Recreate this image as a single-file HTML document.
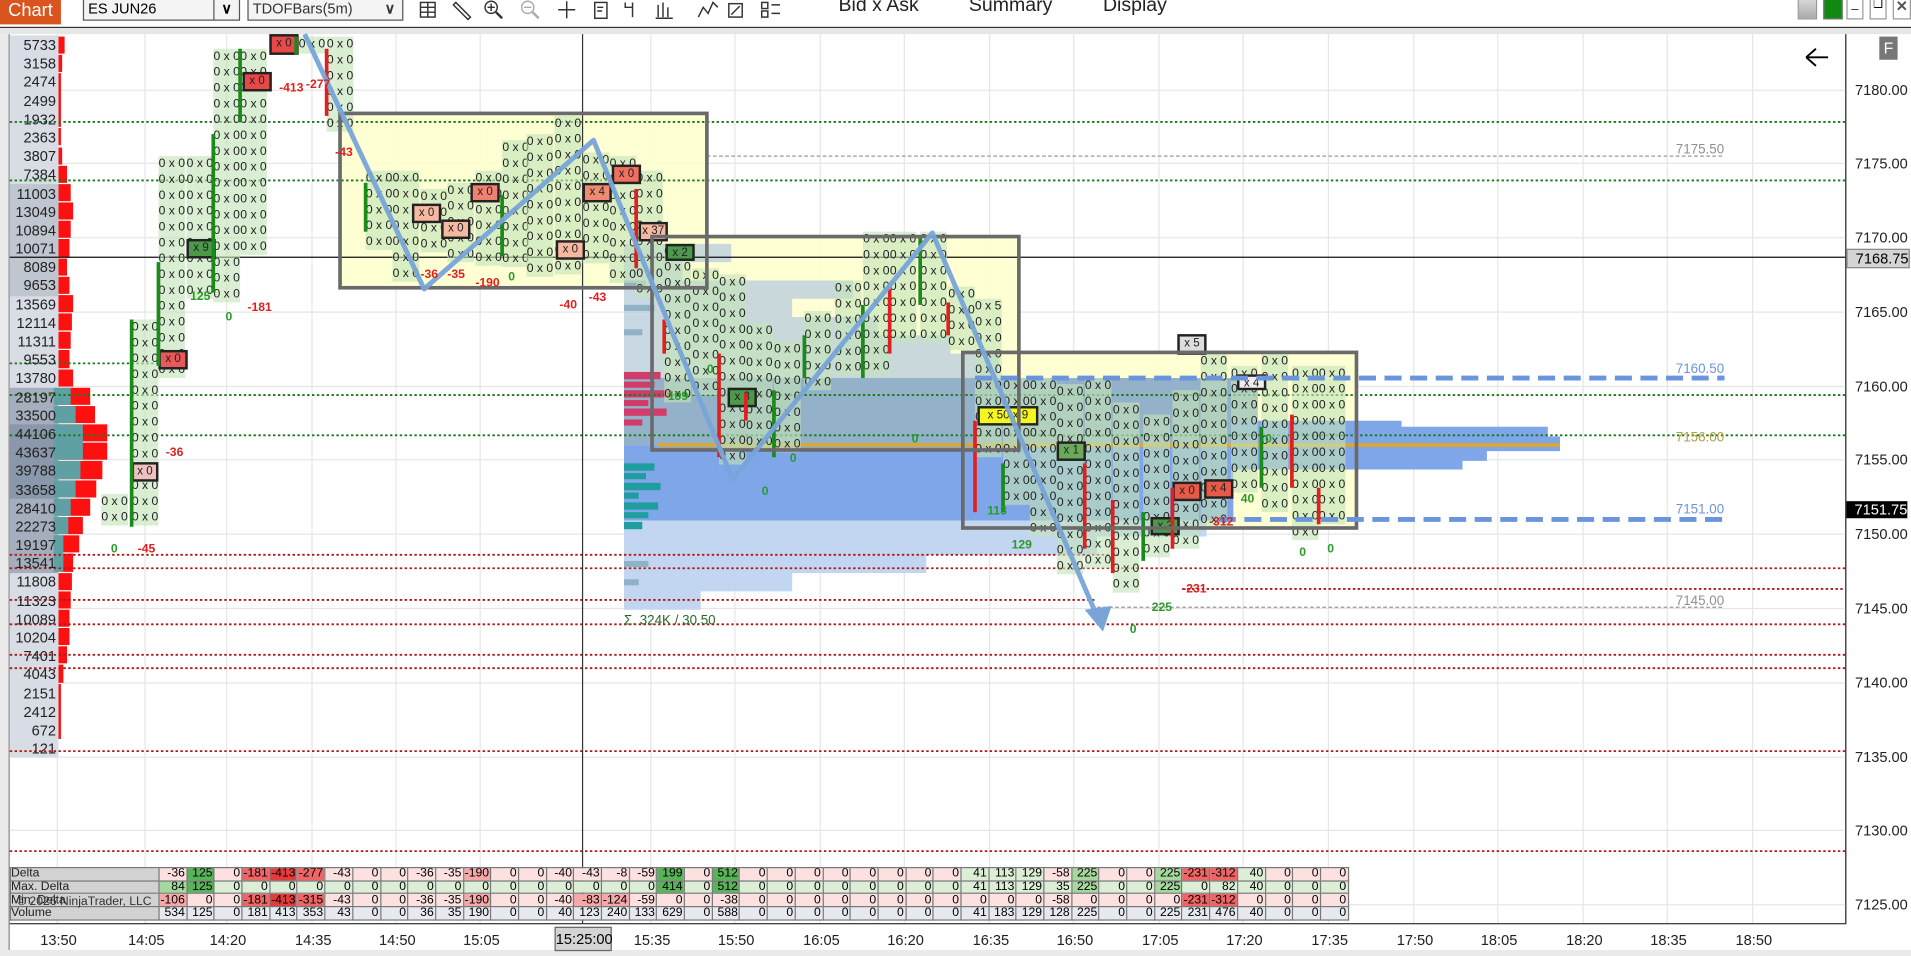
<!DOCTYPE html>
<html><head><meta charset="utf-8">
<style>
html,body{margin:0;padding:0;width:1911px;height:956px;overflow:hidden;background:#fff;}
#s{position:absolute;left:0;top:0;width:1568px;height:784px;transform:scale(1.21875,1.21939);transform-origin:0 0;font-family:"Liberation Sans",sans-serif;overflow:hidden;background:#fff;}
.a{position:absolute;}
.c{position:absolute;width:22px;background:rgba(196,228,184,.62);font-size:10px;line-height:13px;text-align:center;white-space:pre;color:#222;overflow:hidden;}
.hl{position:absolute;border:2px solid #222;box-sizing:border-box;font-size:9.5px;line-height:11px;text-align:center;color:#222;}
.lab{position:absolute;font-size:10px;font-weight:bold;}
.g{color:#2a9a2a}.r{color:#e02020}
table{border-collapse:collapse;position:absolute;left:8px;top:711px;font-size:10px;}
td{height:9.7px;padding:0 1px 0 0;border:1px solid #777;text-align:right;line-height:9px;width:20.7px;overflow:hidden;white-space:nowrap;}
td.h{width:120px;text-align:left;background:#d2d2d2;color:#222;}
.n0{background:#fde0e0}.n1{background:#f6a8a8}.n2{background:#ef6464}.n3{background:#e43c3c}
.p0{background:#dcefd6}.p1{background:#a6d89e}.p2{background:#58b458}.v{background:#e6eaee}
.t{position:absolute;top:764px;font-size:12px;color:#222;}
.pl{position:absolute;left:1522px;font-size:12px;color:#222;}
</style></head><body><div id="s">

<!-- toolbar -->
<div class="a" style="left:0;top:0;width:1568px;height:22px;background:#fff;border-bottom:1px solid #333;"></div>
<div class="a" style="left:0;top:23px;width:1568px;height:5px;background:#e6e6e6;"></div>
<div class="a" style="left:0;top:0;width:50px;height:20px;background:#d9541e;color:#fff;font-size:15px;line-height:18px;text-align:center;">Chart</div>
<div class="a" style="left:68px;top:-2px;width:127px;height:17px;border:1px solid #555;background:#f4f4f4;font-size:12px;line-height:16px;">&nbsp;ES JUN26<span style="position:absolute;right:0;top:0;width:20px;height:17px;border-left:1px solid #555;text-align:center;font-weight:bold;">&#8744;</span></div>
<div class="a" style="left:203px;top:-2px;width:126px;height:17px;border:1px solid #555;background:#f4f4f4;font-size:12px;line-height:16px;color:#333;">&nbsp;TDOFBars(5m)<span style="position:absolute;right:0;top:0;width:20px;text-align:center;font-weight:bold;">&#8744;</span></div>
<svg class="a" style="left:340px;top:0" width="310" height="20" stroke="#333" fill="none" stroke-width="1.2">
<rect x="5" y="2" width="12" height="12"/><line x1="11" y1="2" x2="11" y2="14"/><line x1="5" y1="6" x2="17" y2="6"/><line x1="5" y1="10" x2="17" y2="10"/>
<path d="M34 2 L46 14 L44 16 L32 4Z"/>
<circle cx="63" cy="6" r="5"/><line x1="67" y1="10" x2="72" y2="15" stroke-width="2"/><line x1="60" y1="6" x2="66" y2="6"/><line x1="63" y1="3" x2="63" y2="9"/>
<g stroke="#aaa"><circle cx="93" cy="6" r="5"/><line x1="97" y1="10" x2="102" y2="15" stroke-width="2"/><line x1="90" y1="6" x2="96" y2="6"/></g>
<line x1="118" y1="8" x2="132" y2="8"/><line x1="125" y1="1" x2="125" y2="15"/>
<rect x="148" y="2" width="10" height="13"/><path d="M150 6h5M150 9h4"/>
<path d="M173 2v4h6v-4M179 6v8"/><path d="M200 4v10M204 2v12M208 6v8M198 15h14"/>
<path d="M233 14l4-8 4 5 4-9 4 4"/><rect x="258" y="3" width="11" height="11"/><path d="M260 12l7-7"/>
<rect x="285" y="2" width="5" height="5"/><rect x="285" y="9" width="5" height="5"/><path d="M293 4h7M293 11h7"/>
</svg>
<div class="a" style="left:688px;top:-4px;font-size:16px;color:#222;">Bid x Ask</div>
<div class="a" style="left:795px;top:-4px;font-size:16px;color:#222;">Summary</div>
<div class="a" style="left:905px;top:-4px;font-size:16px;color:#222;">Display</div>
<div class="a" style="left:1475px;top:-3px;width:14px;height:17px;background:linear-gradient(#ddd,#aaa);border:1px solid #999;"></div>
<div class="a" style="left:1496px;top:-3px;width:14px;height:17px;background:#118811;border:1px solid #777;"></div>
<div class="a" style="left:1515px;top:-3px;width:12px;height:17px;border:1px solid #999;background:#fff;font-size:10px;text-align:center;">_</div>
<div class="a" style="left:1534px;top:-3px;width:12px;height:17px;border:1px solid #999;background:#fff;font-size:9px;text-align:center;">&#10063;</div>
<div class="a" style="left:1553px;top:-3px;width:13px;height:17px;border:1px solid #999;background:#fff;font-size:12px;font-weight:bold;text-align:center;color:#555;">&#10005;</div>

<!-- chart panel -->
<div class="a" style="left:0;top:28px;width:7px;height:756px;background:#eaeaea;border-right:1px solid #888;"></div>
<div class="a" style="left:1514px;top:28px;width:1px;height:730px;background:#222;"></div>

<svg class="a" style="left:0;top:0" width="1568" height="784">
<g stroke="#e6e6e6" stroke-width="1">
<line x1="47" y1="28" x2="47" y2="757"/><line x1="119" y1="28" x2="119" y2="757"/><line x1="186" y1="28" x2="186" y2="757"/><line x1="256" y1="28" x2="256" y2="757"/><line x1="325" y1="28" x2="325" y2="757"/><line x1="394" y1="28" x2="394" y2="757"/><line x1="534" y1="28" x2="534" y2="757"/><line x1="603" y1="28" x2="603" y2="757"/><line x1="673" y1="28" x2="673" y2="757"/><line x1="742" y1="28" x2="742" y2="757"/><line x1="812" y1="28" x2="812" y2="757"/><line x1="881" y1="28" x2="881" y2="757"/><line x1="951" y1="28" x2="951" y2="757"/><line x1="1020" y1="28" x2="1020" y2="757"/><line x1="1090" y1="28" x2="1090" y2="757"/><line x1="1160" y1="28" x2="1160" y2="757"/><line x1="1229" y1="28" x2="1229" y2="757"/><line x1="1299" y1="28" x2="1299" y2="757"/><line x1="1368" y1="28" x2="1368" y2="757"/><line x1="1438" y1="28" x2="1438" y2="757"/>
<line x1="8" y1="74" x2="1514" y2="74"/><line x1="8" y1="134" x2="1514" y2="134"/><line x1="8" y1="195" x2="1514" y2="195"/><line x1="8" y1="256" x2="1514" y2="256"/><line x1="8" y1="317" x2="1514" y2="317"/><line x1="8" y1="377" x2="1514" y2="377"/><line x1="8" y1="438" x2="1514" y2="438"/><line x1="8" y1="499" x2="1514" y2="499"/><line x1="8" y1="560" x2="1514" y2="560"/><line x1="8" y1="621" x2="1514" y2="621"/><line x1="8" y1="681" x2="1514" y2="681"/><line x1="8" y1="742" x2="1514" y2="742"/>
</g>
<rect x="279" y="93" width="301" height="143" fill="#ffffcc" opacity=".85"/>
<rect x="535" y="194" width="301" height="175" fill="#ffffcc" opacity=".85"/>
<rect x="790" y="289" width="323" height="144" fill="#ffffcc" opacity=".85"/>
<path d="M512 200H600V215H560V230H700V245H650V260H720V275H780V290H820V310H512Z" fill="#bcd0dc" opacity=".8"/>
<rect x="512" y="310" width="520" height="55" fill="#93b1c8"/>
<rect x="512" y="365" width="500" height="62" fill="#7ea6e8"/>
<path d="M512 427H990V440H900V455H760V470H650V485H575V500H512Z" fill="#c2d6f2"/>
<g fill="#d23c6a"><rect x="512" y="305" width="30" height="6"/><rect x="512" y="313" width="25" height="5"/><rect x="512" y="320" width="40" height="6"/><rect x="512" y="328" width="20" height="5"/><rect x="512" y="335" width="35" height="6"/><rect x="512" y="344" width="15" height="5"/></g>
<g fill="#1e9e9e"><rect x="512" y="380" width="25" height="6"/><rect x="512" y="388" width="18" height="5"/><rect x="512" y="396" width="30" height="6"/><rect x="512" y="404" width="12" height="5"/><rect x="512" y="412" width="28" height="6"/><rect x="512" y="420" width="20" height="5"/><rect x="512" y="428" width="15" height="6"/></g>
<g fill="#8fb2c4"><rect x="512" y="230" width="18" height="5"/><rect x="512" y="250" width="25" height="5"/><rect x="512" y="270" width="15" height="5"/><rect x="512" y="460" width="20" height="5"/><rect x="512" y="475" width="12" height="5"/></g>
<path d="M1010 345H1150V350H1270V358H1280V370H1220V378H1200V385H1010Z" fill="#7ea6e8"/>
<g>
<rect x="8" y="29" width="40" height="592" fill="#d8dce4"/>
<rect x="8" y="151" width="40" height="92" fill="#c0c6d0"/>
<rect x="8" y="318" width="40" height="152" fill="#a4aebc"/>
<rect x="8" y="348" width="40" height="61" fill="#8b97aa"/>
</g>
<g fill="#ff1010">
<rect x="48" y="30" width="5" height="14"/><rect x="48" y="45" width="3" height="14"/><rect x="48" y="60" width="2" height="44"/><rect x="48" y="105" width="2" height="14"/><rect x="48" y="121" width="3" height="14"/><rect x="48" y="136" width="7" height="14"/><rect x="48" y="151" width="10" height="14"/><rect x="48" y="166" width="12" height="14"/><rect x="48" y="181" width="10" height="14"/><rect x="48" y="196" width="9" height="15"/><rect x="48" y="212" width="7" height="14"/><rect x="48" y="227" width="9" height="14"/><rect x="48" y="242" width="12" height="14"/><rect x="48" y="257" width="11" height="14"/><rect x="48" y="272" width="10" height="14"/><rect x="48" y="287" width="9" height="15"/><rect x="48" y="303" width="12" height="14"/><rect x="48" y="318" width="26" height="14"/><rect x="48" y="333" width="30" height="14"/><rect x="48" y="348" width="40" height="14"/><rect x="48" y="363" width="40" height="14"/><rect x="48" y="378" width="36" height="15"/><rect x="48" y="394" width="31" height="14"/><rect x="48" y="409" width="26" height="14"/><rect x="48" y="424" width="20" height="14"/><rect x="48" y="439" width="17" height="14"/><rect x="48" y="454" width="12" height="15"/><rect x="48" y="470" width="11" height="14"/><rect x="48" y="485" width="10" height="14"/><rect x="48" y="500" width="9" height="14"/><rect x="48" y="515" width="9" height="14"/><rect x="48" y="530" width="7" height="14"/><rect x="48" y="545" width="4" height="15"/><rect x="48" y="561" width="2" height="45"/>
</g>
<g fill="#5fa0a4"><rect x="44" y="318" width="14" height="14"/><rect x="44" y="333" width="18" height="14"/><rect x="44" y="348" width="24" height="29"/><rect x="44" y="378" width="22" height="15"/><rect x="44" y="394" width="18" height="14"/><rect x="44" y="409" width="14" height="14"/><rect x="44" y="424" width="12" height="14"/><rect x="44" y="439" width="8" height="30"/></g>
<g stroke-width="1.5" fill="none">
<line x1="8" y1="100" x2="1514" y2="100" stroke="#1a7a1a" stroke-dasharray="2 2"/>
<line x1="8" y1="148" x2="1514" y2="148" stroke="#1a7a1a" stroke-dasharray="2 2"/>
<line x1="8" y1="298" x2="130" y2="298" stroke="#1a7a1a" stroke-dasharray="2 2"/>
<line x1="8" y1="324" x2="1514" y2="324" stroke="#1a7a1a" stroke-dasharray="2 2"/>
<line x1="8" y1="357" x2="1514" y2="357" stroke="#1a7a1a" stroke-dasharray="2 2"/>
<line x1="8" y1="455" x2="920" y2="455" stroke="#b01818" stroke-dasharray="2 2"/>
<line x1="8" y1="466" x2="1514" y2="466" stroke="#b01818" stroke-dasharray="2 2"/>
<line x1="970" y1="483" x2="1514" y2="483" stroke="#b01818" stroke-dasharray="2 2"/>
<line x1="8" y1="492" x2="900" y2="492" stroke="#b01818" stroke-dasharray="2 2"/>
<line x1="8" y1="512" x2="1514" y2="512" stroke="#b01818" stroke-dasharray="2 2"/>
<line x1="8" y1="537" x2="1514" y2="537" stroke="#b01818" stroke-dasharray="2 2"/>
<line x1="8" y1="548" x2="1514" y2="548" stroke="#b01818" stroke-dasharray="2 2"/>
<line x1="8" y1="616" x2="1514" y2="616" stroke="#b01818" stroke-dasharray="2 2"/>
<line x1="8" y1="698" x2="1514" y2="698" stroke="#b01818" stroke-dasharray="2 2"/>
<line x1="580" y1="128" x2="1415" y2="128" stroke="#999" stroke-width="1" stroke-dasharray="3 2"/>
<line x1="900" y1="498" x2="1415" y2="498" stroke="#999" stroke-width="1" stroke-dasharray="3 2"/>
<line x1="8" y1="211" x2="1514" y2="211" stroke="#111" stroke-width="1"/>
<line x1="478" y1="28" x2="478" y2="757" stroke="#333" stroke-width="1"/>
<line x1="540" y1="365" x2="1280" y2="365" stroke="#e0a828" stroke-width="3"/>
</g>
</svg>

<!-- footprint cells -->
<div class="c" style="left:83px;top:405px;height:26px">0 x 0
0 x 0</div>
<div class="c" style="left:108px;top:262px;height:169px">0 x 0
0 x 0
0 x 0
0 x 0
0 x 0
0 x 0
0 x 0
0 x 0
0 x 0
0 x 0
0 x 0
0 x 0
0 x 0</div>
<div class="c" style="left:130px;top:128px;height:182px">0 x 0
0 x 0
0 x 0
0 x 0
0 x 0
0 x 0
0 x 0
0 x 0
0 x 0
0 x 0
0 x 0
0 x 0
0 x 0
0 x 0</div>
<div class="c" style="left:153px;top:128px;height:117px">0 x 0
0 x 0
0 x 0
0 x 0
0 x 0
0 x 0
0 x 0
0 x 0
0 x 0</div>
<div class="c" style="left:175px;top:40px;height:208px">0 x 0
0 x 0
0 x 0
0 x 0
0 x 0
0 x 0
0 x 0
0 x 0
0 x 0
0 x 0
0 x 0
0 x 0
0 x 0
0 x 0
0 x 0
0 x 0</div>
<div class="c" style="left:197px;top:40px;height:169px">0 x 0
0 x 0
0 x 0
0 x 0
0 x 0
0 x 0
0 x 0
0 x 0
0 x 0
0 x 0
0 x 0
0 x 0
0 x 0</div>
<div class="c" style="left:245px;top:30px;height:14px">0 x 0</div>
<div class="c" style="left:268px;top:30px;height:78px">0 x 0
0 x 0
0 x 0
0 x 0
0 x 0
0 x 0</div>
<div class="c" style="left:300px;top:140px;height:65px">0 x 0
0 x 0
0 x 0
0 x 0
0 x 0</div>
<div class="c" style="left:322px;top:140px;height:91px">0 x 0
0 x 0
0 x 0
0 x 0
0 x 0
0 x 0
0 x 0</div>
<div class="c" style="left:345px;top:155px;height:52px">0 x 0
0 x 0
0 x 0
0 x 0</div>
<div class="c" style="left:367px;top:150px;height:65px">0 x 0
0 x 0
0 x 0
0 x 0
0 x 0</div>
<div class="c" style="left:390px;top:140px;height:78px">0 x 0
0 x 0
0 x 0
0 x 0
0 x 0
0 x 0</div>
<div class="c" style="left:412px;top:115px;height:104px">0 x 0
0 x 0
0 x 0
0 x 0
0 x 0
0 x 0
0 x 0
0 x 0</div>
<div class="c" style="left:432px;top:110px;height:117px">0 x 0
0 x 0
0 x 0
0 x 0
0 x 0
0 x 0
0 x 0
0 x 0
0 x 0</div>
<div class="c" style="left:455px;top:95px;height:130px">0 x 0
0 x 0
0 x 0
0 x 0
0 x 0
0 x 0
0 x 0
0 x 0
0 x 0
0 x 0</div>
<div class="c" style="left:478px;top:125px;height:91px">0 x 0
0 x 0
0 x 0
0 x 0
0 x 0
0 x 0
0 x 0</div>
<div class="c" style="left:500px;top:128px;height:104px">0 x 0
0 x 0
0 x 0
0 x 0
0 x 0
0 x 0
0 x 0
0 x 0</div>
<div class="c" style="left:522px;top:140px;height:104px">0 x 0
0 x 0
0 x 0
0 x 0
0 x 0
0 x 0
0 x 0
0 x 0</div>
<div class="c" style="left:545px;top:200px;height:130px">0 x 0
0 x 0
0 x 0
0 x 0
0 x 0
0 x 0
0 x 0
0 x 0
0 x 0
0 x 0</div>
<div class="c" style="left:568px;top:220px;height:104px">0 x 0
0 x 0
0 x 0
0 x 0
0 x 0
0 x 0
0 x 0
0 x 0</div>
<div class="c" style="left:590px;top:225px;height:156px">0 x 0
0 x 0
0 x 0
0 x 0
0 x 0
0 x 0
0 x 0
0 x 0
0 x 0
0 x 0
0 x 0
0 x 0</div>
<div class="c" style="left:612px;top:265px;height:104px">0 x 0
0 x 0
0 x 0
0 x 0
0 x 0
0 x 0
0 x 0
0 x 0</div>
<div class="c" style="left:635px;top:280px;height:91px">0 x 0
0 x 0
0 x 0
0 x 0
0 x 0
0 x 0
0 x 0</div>
<div class="c" style="left:660px;top:255px;height:65px">0 x 0
0 x 0
0 x 0
0 x 0
0 x 0</div>
<div class="c" style="left:685px;top:230px;height:78px">0 x 0
0 x 0
0 x 0
0 x 0
0 x 0
0 x 0</div>
<div class="c" style="left:708px;top:190px;height:117px">0 x 0
0 x 0
0 x 0
0 x 0
0 x 0
0 x 0
0 x 0
0 x 0
0 x 0</div>
<div class="c" style="left:730px;top:190px;height:91px">0 x 0
0 x 0
0 x 0
0 x 0
0 x 0
0 x 0
0 x 0</div>
<div class="c" style="left:755px;top:190px;height:91px">0 x 0
0 x 0
0 x 0
0 x 0
0 x 0
0 x 0
0 x 0</div>
<div class="c" style="left:778px;top:235px;height:52px">0 x 0
0 x 0
0 x 0
0 x 0</div>
<div class="c" style="left:800px;top:245px;height:130px">0 x 50
0 x 0
0 x 0
0 x 0
0 x 0
0 x 0
0 x 0
0 x 0
0 x 0
0 x 0</div>
<div class="c" style="left:823px;top:310px;height:104px">0 x 0
0 x 0
0 x 0
0 x 0
0 x 0
0 x 0
0 x 0
0 x 0</div>
<div class="c" style="left:845px;top:310px;height:130px">0 x 0
0 x 0
0 x 0
0 x 0
0 x 0
0 x 0
0 x 0
0 x 0
0 x 0
0 x 0</div>
<div class="c" style="left:867px;top:315px;height:156px">0 x 0
0 x 0
0 x 0
0 x 0
0 x 0
0 x 0
0 x 0
0 x 0
0 x 0
0 x 0
0 x 0
0 x 0</div>
<div class="c" style="left:890px;top:310px;height:156px">0 x 0
0 x 0
0 x 0
0 x 0
0 x 0
0 x 0
0 x 0
0 x 0
0 x 0
0 x 0
0 x 0
0 x 0</div>
<div class="c" style="left:913px;top:330px;height:156px">0 x 0
0 x 0
0 x 0
0 x 0
0 x 0
0 x 0
0 x 0
0 x 0
0 x 0
0 x 0
0 x 0
0 x 0</div>
<div class="c" style="left:938px;top:340px;height:117px">0 x 0
0 x 0
0 x 0
0 x 0
0 x 0
0 x 0
0 x 0
0 x 0
0 x 0</div>
<div class="c" style="left:962px;top:320px;height:130px">0 x 0
0 x 0
0 x 0
0 x 0
0 x 0
0 x 0
0 x 0
0 x 0
0 x 0
0 x 0</div>
<div class="c" style="left:985px;top:290px;height:143px">0 x 0
0 x 0
0 x 0
0 x 0
0 x 0
0 x 0
0 x 0
0 x 0
0 x 0
0 x 0
0 x 0</div>
<div class="c" style="left:1010px;top:300px;height:104px">0 x 0
0 x 0
0 x 0
0 x 0
0 x 0
0 x 0
0 x 0
0 x 0</div>
<div class="c" style="left:1035px;top:290px;height:130px">0 x 0
0 x 0
0 x 0
0 x 0
0 x 0
0 x 0
0 x 0
0 x 0
0 x 0
0 x 0</div>
<div class="c" style="left:1060px;top:300px;height:143px">0 x 0
0 x 0
0 x 0
0 x 0
0 x 0
0 x 0
0 x 0
0 x 0
0 x 0
0 x 0
0 x 0</div>
<div class="c" style="left:1082px;top:300px;height:130px">0 x 0
0 x 0
0 x 0
0 x 0
0 x 0
0 x 0
0 x 0
0 x 0
0 x 0
0 x 0</div>

<!-- highlighted cells -->
<div class="hl" style="left:221px;top:28px;width:24px;height:17px;background:#e84848">x 0</div>
<div class="hl" style="left:199px;top:59px;width:24px;height:16px;background:#e84848">x 0</div>
<div class="hl" style="left:130px;top:287px;width:24px;height:16px;background:#e85858">x 0</div>
<div class="hl" style="left:108px;top:379px;width:22px;height:16px;background:#f0c0c0">x 0</div>
<div class="hl" style="left:153px;top:196px;width:24px;height:16px;background:#4a9a4a">x 9</div>
<div class="hl" style="left:338px;top:167px;width:24px;height:16px;background:#f6b8a0">x 0</div>
<div class="hl" style="left:362px;top:180px;width:24px;height:16px;background:#f6b8a0">x 0</div>
<div class="hl" style="left:386px;top:150px;width:24px;height:16px;background:#f08070">x 0</div>
<div class="hl" style="left:456px;top:197px;width:24px;height:16px;background:#f6b8a0">x 0</div>
<div class="hl" style="left:478px;top:150px;width:24px;height:16px;background:#f08a70">x 4</div>
<div class="hl" style="left:502px;top:135px;width:24px;height:16px;background:#f07060">x 0</div>
<div class="hl" style="left:524px;top:182px;width:24px;height:16px;background:#f6b8a0">x 37</div>
<div class="hl" style="left:546px;top:200px;width:24px;height:14px;background:#4a9a4a">x 2</div>
<div class="hl" style="left:597px;top:318px;width:24px;height:16px;background:#4a9a4a">x 3</div>
<div class="hl" style="left:966px;top:274px;width:24px;height:17px;background:#ddd">x 5</div>
<div class="hl" style="left:802px;top:333px;width:50px;height:16px;background:#f5f520">x 50 x 9</div>
<div class="hl" style="left:867px;top:362px;width:24px;height:16px;background:#6aaa5a">x 1</div>
<div class="hl" style="left:944px;top:424px;width:24px;height:15px;background:#4a9a4a">x 2</div>
<div class="hl" style="left:962px;top:395px;width:24px;height:16px;background:#e85a48">x 0</div>
<div class="hl" style="left:988px;top:393px;width:24px;height:16px;background:#e85a48">x 4</div>
<div class="hl" style="left:1015px;top:307px;width:24px;height:13px;background:#eee">x 4</div>

<svg class="a" style="left:0;top:0" width="1568" height="784">
<g stroke-width="3">
<line x1="108" y1="262" x2="108" y2="432" stroke="#1a8a1a"/>
<line x1="130" y1="215" x2="130" y2="300" stroke="#1a8a1a"/>
<line x1="175" y1="110" x2="175" y2="240" stroke="#1a8a1a"/>
<line x1="197" y1="40" x2="197" y2="100" stroke="#1a8a1a"/>
<line x1="243" y1="30" x2="243" y2="45" stroke="#1a8a1a"/>
<line x1="268" y1="40" x2="268" y2="95" stroke="#e02020"/>
<line x1="300" y1="150" x2="300" y2="190" stroke="#1a8a1a"/>
<line x1="412" y1="160" x2="412" y2="210" stroke="#1a8a1a"/>
<line x1="522" y1="155" x2="522" y2="220" stroke="#e02020"/>
<line x1="545" y1="262" x2="545" y2="290" stroke="#e02020"/>
<line x1="590" y1="290" x2="590" y2="375" stroke="#e02020"/>
<line x1="612" y1="322" x2="612" y2="345" stroke="#e02020"/>
<line x1="635" y1="320" x2="635" y2="375" stroke="#1a8a1a"/>
<line x1="660" y1="275" x2="660" y2="310" stroke="#1a8a1a"/>
<line x1="708" y1="250" x2="708" y2="310" stroke="#1a8a1a"/>
<line x1="730" y1="237" x2="730" y2="290" stroke="#e02020"/>
<line x1="755" y1="195" x2="755" y2="250" stroke="#1a8a1a"/>
<line x1="778" y1="248" x2="778" y2="275" stroke="#e02020"/>
<line x1="800" y1="345" x2="800" y2="420" stroke="#e02020"/>
<line x1="823" y1="380" x2="823" y2="420" stroke="#1a8a1a"/>
<line x1="890" y1="380" x2="890" y2="450" stroke="#e02020"/>
<line x1="913" y1="410" x2="913" y2="470" stroke="#e02020"/>
<line x1="938" y1="420" x2="938" y2="460" stroke="#1a8a1a"/>
<line x1="962" y1="400" x2="962" y2="450" stroke="#e02020"/>
<line x1="1035" y1="350" x2="1035" y2="400" stroke="#1a8a1a"/>
<line x1="1060" y1="340" x2="1060" y2="400" stroke="#e02020"/>
<line x1="1082" y1="400" x2="1082" y2="430" stroke="#e02020"/>
</g>
<g fill="none" stroke="#6a6a6a" stroke-width="3">
<rect x="279" y="93" width="301" height="143"/>
<rect x="535" y="194" width="301" height="175"/>
<rect x="790" y="289" width="323" height="144"/>
</g>
<line x1="800" y1="310" x2="1415" y2="310" stroke="#6a94dc" stroke-width="4" stroke-dasharray="14 7"/>
<line x1="1000" y1="426" x2="1415" y2="426" stroke="#6a94dc" stroke-width="4" stroke-dasharray="14 7"/>
<polyline points="250,28 348,237 487,115 601,393 765,191 900,505" fill="none" stroke="#78a4d8" stroke-width="4" stroke-linejoin="round" opacity=".95"/>
<path d="M905 518 L890 500 L912 497Z" fill="#78a4d8"/>
<g font-family="Liberation Sans" font-size="11" fill="#909090">
<text x="1375" y="126">7175.50</text><text x="1375" y="496">7145.00</text>
<text x="1375" y="306" fill="#6a94dc">7160.50</text><text x="1375" y="362" fill="#b0a040">7156.00</text><text x="1375" y="421" fill="#6a94dc">7151.00</text>
</g>
<text x="512" y="512" font-family="Liberation Sans" font-size="11" fill="#2a6a2a">Σ. 324K / 30.50</text>
<path d="M1482 47H1500M1482 47L1490 40M1482 47L1490 54" stroke="#000" stroke-width="1.6" fill="none"/>
</svg>
<div class="a" style="left:1542px;top:30px;width:15px;height:19px;background:#777;color:#fff;font-size:13px;text-align:center;line-height:19px;">F</div>

<div class="lab g" style="left:156px;top:238px">125</div><div class="lab g" style="left:185px;top:255px">0</div><div class="lab r" style="left:203px;top:247px">-181</div>
<div class="lab r" style="left:136px;top:366px">-36</div><div class="lab r" style="left:113px;top:445px">-45</div><div class="lab g" style="left:91px;top:445px">0</div>
<div class="lab r" style="left:229px;top:67px">-413</div><div class="lab r" style="left:251px;top:64px">-277</div><div class="lab r" style="left:275px;top:120px">-43</div>
<div class="lab r" style="left:345px;top:220px">-36</div><div class="lab r" style="left:367px;top:220px">-35</div><div class="lab r" style="left:390px;top:227px">-190</div><div class="lab g" style="left:417px;top:222px">0</div>
<div class="lab r" style="left:459px;top:245px">-40</div><div class="lab r" style="left:483px;top:239px">-43</div>
<div class="lab g" style="left:548px;top:320px">199</div><div class="lab g" style="left:580px;top:298px">0</div><div class="lab g" style="left:625px;top:398px">0</div><div class="lab g" style="left:648px;top:371px">0</div>
<div class="lab g" style="left:748px;top:355px">0</div><div class="lab g" style="left:810px;top:414px">113</div><div class="lab g" style="left:830px;top:442px">129</div>
<div class="lab g" style="left:945px;top:493px">225</div><div class="lab r" style="left:970px;top:478px">-231</div><div class="lab r" style="left:992px;top:423px">-312</div><div class="lab g" style="left:1018px;top:404px">40</div>
<div class="lab g" style="left:1066px;top:448px">0</div><div class="lab g" style="left:1089px;top:445px">0</div><div class="lab g" style="left:927px;top:511px">0</div><div class="lab g" style="left:1038px;top:355px">0</div>

<div class="a" style="left:8px;top:30px;width:38px;font-size:12px;line-height:15.18px;text-align:right;color:#222;">5733<br>3158<br>2474<br>2499<br>1932<br>2363<br>3807<br>7384<br>11003<br>13049<br>10894<br>10071<br>8089<br>9653<br>13569<br>12114<br>11311<br>9553<br>13780<br>28197<br>33500<br>44106<br>43637<br>39788<br>33658<br>28410<br>22273<br>19197<br>13541<br>11808<br>11323<br>10089<br>10204<br>7401<br>4043<br>2151<br>2412<br>672<br>121</div>

<div class="pl" style="top:67px">7180.00</div><div class="pl" style="top:127px">7175.00</div><div class="pl" style="top:188px">7170.00</div><div class="pl" style="top:249px">7165.00</div><div class="pl" style="top:310px">7160.00</div><div class="pl" style="top:370px">7155.00</div><div class="pl" style="top:431px">7150.00</div><div class="pl" style="top:492px">7145.00</div><div class="pl" style="top:553px">7140.00</div><div class="pl" style="top:614px">7135.00</div><div class="pl" style="top:674px">7130.00</div><div class="pl" style="top:735px">7125.00</div>
<div class="a" style="left:1515px;top:204px;width:50px;height:14px;background:#d4d4d4;border:1px solid #888;font-size:12px;line-height:14px;text-align:right;">7168.75</div>
<div class="a" style="left:1515px;top:411px;width:50px;height:14px;background:#000;color:#fff;font-size:12px;line-height:14px;text-align:right;">7151.75</div>

<table>
<tr><td class="h">Delta</td><td class="n0">-36</td><td class="p2">125</td><td class="n0">0</td><td class="n2">-181</td><td class="n3">-413</td><td class="n2">-277</td><td class="n0">-43</td><td class="n0">0</td><td class="n0">0</td><td class="n0">-36</td><td class="n0">-35</td><td class="n1">-190</td><td class="n0">0</td><td class="n0">0</td><td class="n0">-40</td><td class="n0">-43</td><td class="n0">-8</td><td class="n0">-59</td><td class="p2">199</td><td class="n0">0</td><td class="p2">512</td><td class="n0">0</td><td class="n0">0</td><td class="n0">0</td><td class="n0">0</td><td class="n0">0</td><td class="n0">0</td><td class="n0">0</td><td class="n0">0</td><td class="p0">41</td><td class="p0">113</td><td class="p0">129</td><td class="n0">-58</td><td class="p1">225</td><td class="n0">0</td><td class="n0">0</td><td class="p1">225</td><td class="n2">-231</td><td class="n2">-312</td><td class="p0">40</td><td class="n0">0</td><td class="n0">0</td><td class="n0">0</td></tr>
<tr><td class="h">Max. Delta</td><td class="p1">84</td><td class="p2">125</td><td class="p0">0</td><td class="p0">0</td><td class="p0">0</td><td class="p0">0</td><td class="p0">0</td><td class="p0">0</td><td class="p0">0</td><td class="p0">0</td><td class="p0">0</td><td class="p0">0</td><td class="p0">0</td><td class="p0">0</td><td class="p0">0</td><td class="p0">0</td><td class="p0">0</td><td class="p0">0</td><td class="p2">414</td><td class="p0">0</td><td class="p2">512</td><td class="p0">0</td><td class="p0">0</td><td class="p0">0</td><td class="p0">0</td><td class="p0">0</td><td class="p0">0</td><td class="p0">0</td><td class="p0">0</td><td class="p0">41</td><td class="p0">113</td><td class="p0">129</td><td class="p0">35</td><td class="p1">225</td><td class="p0">0</td><td class="p0">0</td><td class="p1">225</td><td class="p0">0</td><td class="p0">82</td><td class="p0">40</td><td class="p0">0</td><td class="p0">0</td><td class="p0">0</td></tr>
<tr><td class="h">Min. Delta</td><td class="n1">-106</td><td class="n0">0</td><td class="n0">0</td><td class="n2">-181</td><td class="n3">-413</td><td class="n2">-315</td><td class="n0">-43</td><td class="n0">0</td><td class="n0">0</td><td class="n0">-36</td><td class="n0">-35</td><td class="n1">-190</td><td class="n0">0</td><td class="n0">0</td><td class="n0">-40</td><td class="n1">-83</td><td class="n1">-124</td><td class="n0">-59</td><td class="n0">0</td><td class="n0">0</td><td class="n0">-38</td><td class="n0">0</td><td class="n0">0</td><td class="n0">0</td><td class="n0">0</td><td class="n0">0</td><td class="n0">0</td><td class="n0">0</td><td class="n0">0</td><td class="n0">0</td><td class="n0">0</td><td class="n0">0</td><td class="n0">-58</td><td class="n0">0</td><td class="n0">0</td><td class="n0">0</td><td class="n0">0</td><td class="n2">-231</td><td class="n2">-312</td><td class="n0">0</td><td class="n0">0</td><td class="n0">0</td><td class="n0">0</td></tr>
<tr><td class="h">Volume</td><td class="v">534</td><td class="v">125</td><td class="v">0</td><td class="v">181</td><td class="v">413</td><td class="v">353</td><td class="v">43</td><td class="v">0</td><td class="v">0</td><td class="v">36</td><td class="v">35</td><td class="v">190</td><td class="v">0</td><td class="v">0</td><td class="v">40</td><td class="v">123</td><td class="v">240</td><td class="v">133</td><td class="v">629</td><td class="v">0</td><td class="v">588</td><td class="v">0</td><td class="v">0</td><td class="v">0</td><td class="v">0</td><td class="v">0</td><td class="v">0</td><td class="v">0</td><td class="v">0</td><td class="v">41</td><td class="v">183</td><td class="v">129</td><td class="v">128</td><td class="v">225</td><td class="v">0</td><td class="v">0</td><td class="v">225</td><td class="v">231</td><td class="v">476</td><td class="v">40</td><td class="v">0</td><td class="v">0</td><td class="v">0</td></tr>
</table>
<div class="a" style="left:14px;top:734px;font-size:10px;color:#333;">© 2026 NinjaTrader, LLC</div>

<div class="a" style="left:8px;top:757px;width:1506px;height:1px;background:#333;"></div>
<div class="a" style="left:0;top:779px;width:1568px;height:5px;background:#eaeaea;"></div>
<div class="t" style="left:33px">13:50</div><div class="t" style="left:105px">14:05</div><div class="t" style="left:172px">14:20</div><div class="t" style="left:242px">14:35</div><div class="t" style="left:311px">14:50</div><div class="t" style="left:380px">15:05</div>
<div class="a" style="left:455px;top:760px;width:45px;height:18px;background:#d4d4d4;border:1px solid #666;font-size:12px;line-height:18px;text-align:center;">15:25:00</div>
<div class="t" style="left:520px">15:35</div><div class="t" style="left:589px">15:50</div><div class="t" style="left:659px">16:05</div><div class="t" style="left:728px">16:20</div><div class="t" style="left:798px">16:35</div><div class="t" style="left:867px">16:50</div><div class="t" style="left:937px">17:05</div><div class="t" style="left:1006px">17:20</div><div class="t" style="left:1076px">17:35</div><div class="t" style="left:1146px">17:50</div><div class="t" style="left:1215px">18:05</div><div class="t" style="left:1285px">18:20</div><div class="t" style="left:1354px">18:35</div><div class="t" style="left:1424px">18:50</div>
</div></body></html>
